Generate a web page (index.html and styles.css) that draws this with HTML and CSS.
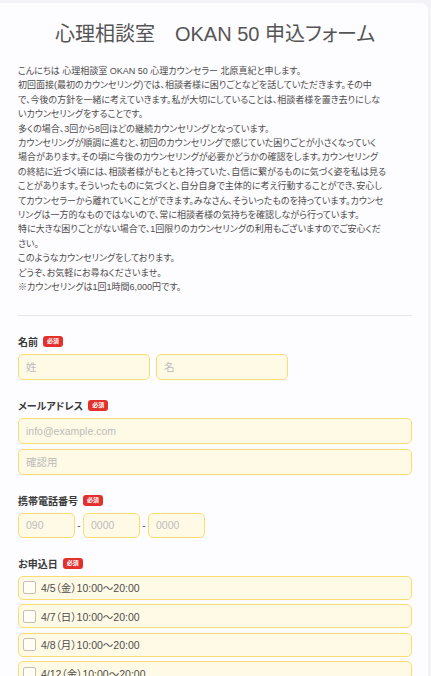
FILE: index.html
```html
<!DOCTYPE html>
<html lang="ja">
<head>
<meta charset="utf-8">
<title>心理相談室 OKAN 50 申込フォーム</title>
<link rel="stylesheet" href="styles.css">
</head>
<body>
<div class="card">
  <h1 class="title">心理相談室　OKAN 50 申込フォーム</h1>
  <p class="intro">
    <span class="ln">こんにちは 心理相談室 OKAN 50 心理カウンセラー 北原真紀と申します。</span>
    <span class="ln">初回面接(最初のカウンセリング)では、相談者様に困りごとなどを話していただきます。その中</span>
    <span class="ln">で、今後の方針を一緒に考えていきます。私が大切にしていることは、相談者様を置き去りにしな</span>
    <span class="ln">いカウンセリングをすることです。</span>
    <span class="ln">多くの場合、3回から8回ほどの継続カウンセリングとなっています。</span>
    <span class="ln">カウンセリングが順調に進むと、初回のカウンセリングで感じていた困りごとが小さくなっていく</span>
    <span class="ln">場合があります。その頃に今後のカウンセリングが必要かどうかの確認をします。カウンセリング</span>
    <span class="ln">の終結に近づく頃には、相談者様がもともと持っていた、自信に繋がるものに気づく姿を私は見る</span>
    <span class="ln">ことがあります。そういったものに気づくと、自分自身で主体的に考え行動することができ、安心し</span>
    <span class="ln">てカウンセラーから離れていくことができます。みなさん、そういったものを持っています。カウンセ</span>
    <span class="ln">リングは一方的なものではないので、常に相談者様の気持ちを確認しながら行っています。</span>
    <span class="ln">特に大きな困りごとがない場合で、1回限りのカウンセリングの利用もございますのでご安心くだ</span>
    <span class="ln">さい。</span>
    <span class="ln">このようなカウンセリングをしております。</span>
    <span class="ln">どうぞ、お気軽にお尋ねくださいませ。</span>
    <span class="ln">※カウンセリングは1回1時間6,000円です。</span>
  </p>
  <hr class="divider">
  <form class="form">
    <div class="field">
      <div class="label">名前<span class="req">必須</span></div>
      <div class="row">
        <input class="input half" type="text" placeholder="姓">
        <input class="input half" type="text" placeholder="名">
      </div>
    </div>
    <div class="field">
      <div class="label">メールアドレス<span class="req">必須</span></div>
      <div class="stack">
        <input class="input" type="text" placeholder="info@example.com">
        <input class="input" type="text" placeholder="確認用">
      </div>
    </div>
    <div class="field">
      <div class="label">携帯電話番号<span class="req">必須</span></div>
      <div class="row tel">
        <input class="input short" type="text" placeholder="090">
        <span class="dash">-</span>
        <input class="input short" type="text" placeholder="0000">
        <span class="dash">-</span>
        <input class="input short" type="text" placeholder="0000">
      </div>
    </div>
    <div class="field">
      <div class="label">お申込日<span class="req">必須</span></div>
      <div class="options">
        <label class="option"><span class="box"></span>4/5（金）10:00〜20:00</label>
        <label class="option"><span class="box"></span>4/7（日）10:00〜20:00</label>
        <label class="option"><span class="box"></span>4/8（月）10:00〜20:00</label>
        <label class="option"><span class="box"></span>4/12（金）10:00〜20:00</label>
        <label class="option"><span class="box"></span>4/14（日）10:00〜20:00</label>
      </div>
    </div>
  </form>
</div>
</body>
</html>
```
FILE: styles.css
```css
html, body {
  margin: 0;
  padding: 0;
}
body {
  background: #f2f2f7;
  font-family: "Liberation Sans", "Noto Sans CJK JP", sans-serif;
  font-feature-settings: "palt";
  color: #4a4a4a;
}
.card {
  margin: 3px 3px 0 0;
  background: #fdfcfe;
  border-radius: 0 7px 0 0;
  padding: 16px 16px 40px 18px;
}
.title {
  margin: 0;
  text-align: center;
  font-weight: normal;
  font-size: 20px;
  line-height: 30px;
  color: #555;
}
.intro {
  margin: 15px 0 0;
  font-size: 9px;
  line-height: 14.4px;
  color: #4d4d4d;
}
.ln {
  display: block;
  white-space: nowrap;
}
.divider {
  border: none;
  border-top: 1px solid #e6e6ea;
  margin: 20px 0 0;
}
.form {
  display: flex;
  flex-direction: column;
  gap: 19px;
  padding-top: 19px;
}
.field {
  display: flex;
  flex-direction: column;
  gap: 5px;
}
.label {
  display: flex;
  align-items: center;
  height: 14px;
  font-size: 10px;
  font-weight: bold;
  color: #3a3a3a;
}
.req {
  display: inline-block;
  margin-left: 5px;
  padding: 0 4px;
  height: 11px;
  line-height: 11px;
  border-radius: 3px;
  background: #e2302d;
  color: #fff;
  font-size: 6px;
  font-weight: bold;
}
.row {
  display: flex;
  gap: 6px;
}
.stack {
  display: flex;
  flex-direction: column;
  gap: 5px;
}
.input {
  box-sizing: border-box;
  height: 26px;
  width: 100%;
  margin: 0;
  padding: 0 7px;
  border: 1px solid #fbdc73;
  border-radius: 5px;
  background: #fffae6;
  font-family: "Liberation Sans", "Noto Sans CJK JP", sans-serif;
  font-size: 10.5px;
  color: #444;
  outline: none;
}
.input::placeholder {
  color: #bcbcbc;
}
.half {
  width: 132px;
}
.tel {
  gap: 2px;
  align-items: center;
}
.short {
  width: 57px;
  height: 25px;
}
.dash {
  width: 4px;
  font-size: 10px;
  color: #555;
  text-align: center;
}
.options {
  display: flex;
  flex-direction: column;
  gap: 4.5px;
}
.option {
  box-sizing: border-box;
  display: flex;
  align-items: center;
  gap: 5px;
  height: 24px;
  padding-left: 4px;
  border: 1px solid #fbdc73;
  border-radius: 5px;
  background: #fffae6;
  font-size: 10.5px;
  color: #4d4d4d;
}
.box {
  box-sizing: border-box;
  width: 13px;
  height: 13px;
  border: 1px solid #c4c0b4;
  border-radius: 2px;
  background: #fffdf4;
}
```
